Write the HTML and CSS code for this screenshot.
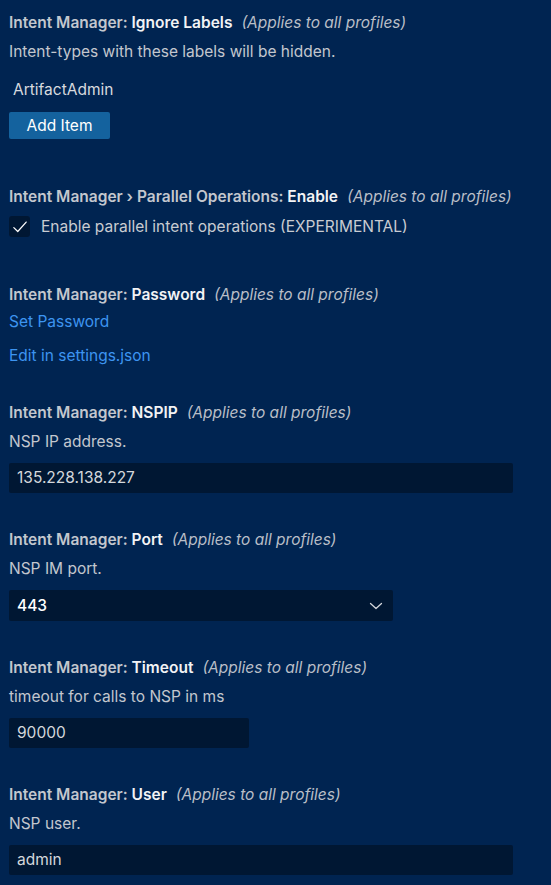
FILE: index.html
```html
<!DOCTYPE html>
<html>
<head>
<meta charset="utf-8">
<link rel="stylesheet" href="styles.css">
</head>
<body>
<div class="settings">
  <div class="item item-list">
    <div class="title"><span class="cat">Intent Manager: </span><span class="label">Ignore Labels</span><span class="scope">(Applies to all profiles)</span></div>
    <div class="desc">Intent-types with these labels will be hidden.</div>
    <div class="list-row">ArtifactAdmin</div>
    <button class="btn">Add Item</button>
  </div>

  <div class="item item-check">
    <div class="title"><span class="cat">Intent Manager › Parallel Operations: </span><span class="label">Enable</span><span class="scope">(Applies to all profiles)</span></div>
    <div class="check-row">
      <span class="checkbox"><svg width="18" height="18" viewBox="0 0 16 16"><path d="M2.5 8.6 L6 12 L13.5 3.6" fill="none" stroke="#ffffff" stroke-width="1.1" stroke-linecap="round" stroke-linejoin="round"/></svg></span>
      <span class="check-label">Enable parallel intent operations (EXPERIMENTAL)</span>
    </div>
  </div>

  <div class="item item-links">
    <div class="title"><span class="cat">Intent Manager: </span><span class="label">Password</span><span class="scope">(Applies to all profiles)</span></div>
    <div class="link link-first">Set Password</div>
    <div class="link link-second">Edit in settings.json</div>
  </div>

  <div class="item">
    <div class="title"><span class="cat">Intent Manager: </span><span class="label">NSPIP</span><span class="scope">(Applies to all profiles)</span></div>
    <div class="desc">NSP IP address.</div>
    <div class="input wide">135.228.138.227</div>
  </div>

  <div class="item">
    <div class="title"><span class="cat">Intent Manager: </span><span class="label">Port</span><span class="scope">(Applies to all profiles)</span></div>
    <div class="desc">NSP IM port.</div>
    <div class="input select"><span class="select-value">443</span><svg class="chev" width="14" height="8" viewBox="0 0 14 8"><path d="M1.5 1.5 L7 6.5 L12.5 1.5" fill="none" stroke="#d4d7dc" stroke-width="1.3" stroke-linecap="round" stroke-linejoin="round"/></svg></div>
  </div>

  <div class="item">
    <div class="title"><span class="cat">Intent Manager: </span><span class="label">Timeout</span><span class="scope">(Applies to all profiles)</span></div>
    <div class="desc">timeout for calls to NSP in ms</div>
    <div class="input narrow">90000</div>
  </div>

  <div class="item">
    <div class="title"><span class="cat">Intent Manager: </span><span class="label">User</span><span class="scope">(Applies to all profiles)</span></div>
    <div class="desc">NSP user.</div>
    <div class="input wide">admin</div>
  </div>
</div>
</body>
</html>
```

FILE: styles.css
```css
html, body {
  margin: 0;
  padding: 0;
  background: #002451;
}
body {
  font-family: Inter, "Noto Sans", "Liberation Sans", sans-serif;
  font-size: 15.5px;
  color: #c9ccd2;
  width: 551px;
  height: 885px;
  overflow: hidden;
}
.settings {
  display: flex;
  flex-direction: column;
  padding: 12px 0 0 9px;
}
.item {
  display: flex;
  flex-direction: column;
  align-items: flex-start;
  margin-bottom: 36px;
}
.title {
  line-height: 21px;
  height: 21px;
  white-space: nowrap;
}
.cat {
  font-weight: 600;
  color: #c3c7ce;
}
.label {
  font-weight: 600;
  color: #f2f3f5;
}
.scope {
  font-style: italic;
  color: #b9bec7;
  margin-left: 9px;
}
.desc {
  line-height: 22px;
  margin-top: 8px;
  color: #c3c7ce;
}
.list-row {
  margin-top: 16px;
  line-height: 22px;
  padding-left: 4px;
  color: #d7dadf;
}
.btn {
  margin-top: 11px;
  width: 101px;
  height: 27px;
  border: none;
  border-radius: 2px;
  background: #14629e;
  color: #ffffff;
  font-family: inherit;
  font-size: 15.5px;
  padding: 0;
}
.item-list {
  margin-bottom: 47px;
}
.check-row {
  display: flex;
  align-items: center;
  margin-top: 9px;
  height: 21px;
}
.checkbox {
  width: 21px;
  height: 21px;
  border-radius: 3px;
  background: #001733;
  display: flex;
  align-items: center;
  justify-content: center;
}
.check-label {
  margin-left: 11px;
  color: #c9ccd2;
}
.item-check {
  margin-bottom: 47px;
}
.link {
  color: #3d94f0;
  line-height: 22px;
}
.link-first {
  margin-top: 6px;
}
.link-second {
  margin-top: 12px;
}
.item-links {
  margin-bottom: 35px;
}
.input {
  margin-top: 10px;
  height: 30px;
  line-height: 30px;
  background: #001733;
  border-radius: 2px;
  box-sizing: border-box;
  padding: 0 8px;
  color: #d4d7dc;
}
.wide {
  width: 504px;
}
.narrow {
  width: 240px;
}
.select {
  width: 384px;
  height: 31px;
  line-height: 31px;
  display: flex;
  align-items: center;
  justify-content: space-between;
  padding-right: 10px;
}
.select-value {
  color: #ffffff;
  font-weight: 500;
}
.chev {
  display: block;
}
```
